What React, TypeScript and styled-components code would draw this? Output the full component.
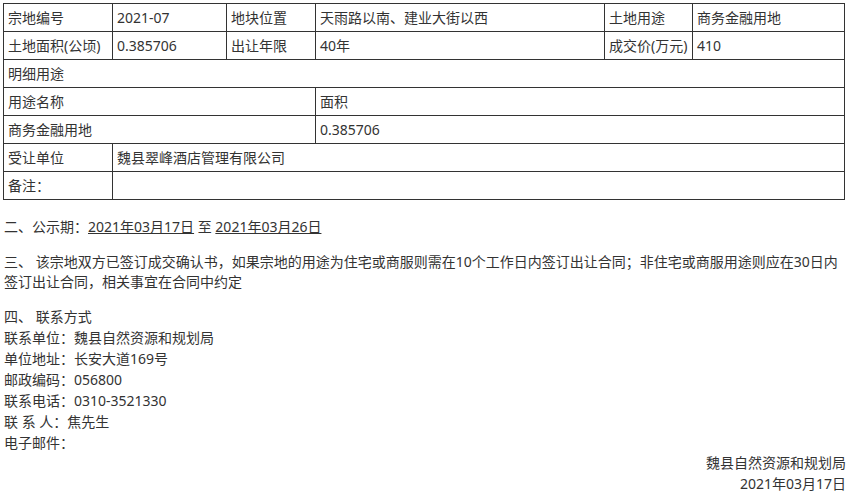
import React from "react";
import styled, { createGlobalStyle } from "styled-components";

const Global = createGlobalStyle`
  html, body { margin: 0; padding: 0; background: #fff; }
  body {
    font-family: "Noto Sans", "Noto Sans CJK SC", sans-serif;
    font-size: 14px;
    color: #333;
  }
`;

const Page = styled.div`
  padding: 3px 3px 0 3px;
  width: 842px;
`;

const Table = styled.table`
  border-collapse: collapse;
  table-layout: fixed;
  width: 842px;
`;

const Cell = styled.td`
  border: 1px solid #333;
  height: 27px;
  padding: 0 4px;
  line-height: 20px;
  vertical-align: middle;
  white-space: nowrap;
  overflow: hidden;
`;

const Section = styled.p<{ $top: number }>`
  margin: ${(p) => p.$top}px 0 0 1px;
  line-height: 20px;
`;

const Date = styled.span`
  text-decoration: underline;
`;

const Contact = styled.div`
  margin: 14px 0 0 1px;
  line-height: 21px;
`;

const Line = styled.div``;

const Sign = styled.div`
  text-align: right;
  line-height: 20.5px;
  margin-right: -1px;
`;

const widths = [109, 114, 89, 289, 88, 152];

export default function App() {
  return (
    <>
      <Global />
      <Page>
        <Table>
          <colgroup>
            {widths.map((w, i) => (
              <col key={i} style={{ width: w }} />
            ))}
          </colgroup>
          <tbody>
            <tr>
              <Cell>宗地编号</Cell>
              <Cell>2021-07</Cell>
              <Cell>地块位置</Cell>
              <Cell>天雨路以南、建业大街以西</Cell>
              <Cell>土地用途</Cell>
              <Cell>商务金融用地</Cell>
            </tr>
            <tr>
              <Cell>土地面积(公顷)</Cell>
              <Cell>0.385706</Cell>
              <Cell>出让年限</Cell>
              <Cell>40年</Cell>
              <Cell>成交价(万元)</Cell>
              <Cell>410</Cell>
            </tr>
            <tr>
              <Cell colSpan={6}>明细用途</Cell>
            </tr>
            <tr>
              <Cell colSpan={3}>用途名称</Cell>
              <Cell colSpan={3}>面积</Cell>
            </tr>
            <tr>
              <Cell colSpan={3}>商务金融用地</Cell>
              <Cell colSpan={3}>0.385706</Cell>
            </tr>
            <tr>
              <Cell>受让单位</Cell>
              <Cell colSpan={5}>魏县翠峰酒店管理有限公司</Cell>
            </tr>
            <tr>
              <Cell>备注：</Cell>
              <Cell colSpan={5}></Cell>
            </tr>
          </tbody>
        </Table>
        <Section $top={17}>
          二、公示期：<Date>2021年03月17日</Date> 至 <Date>2021年03月26日</Date>
        </Section>
        <Section $top={15}>
          三、 该宗地双方已签订成交确认书，如果宗地的用途为住宅或商服则需在10个工作日内签订出让合同；非住宅或商服用途则应在30日内
          <br />
          签订出让合同，相关事宜在合同中约定
        </Section>
        <Contact>
          <Line>四、 联系方式</Line>
          <Line>联系单位：魏县自然资源和规划局</Line>
          <Line>单位地址：长安大道169号</Line>
          <Line>邮政编码：056800</Line>
          <Line>联系电话：0310-3521330</Line>
          <Line>联 系 人：焦先生</Line>
          <Line>电子邮件：</Line>
        </Contact>
        <Sign>
          <Line>魏县自然资源和规划局</Line>
          <Line>2021年03月17日</Line>
        </Sign>
      </Page>
    </>
  );
}
